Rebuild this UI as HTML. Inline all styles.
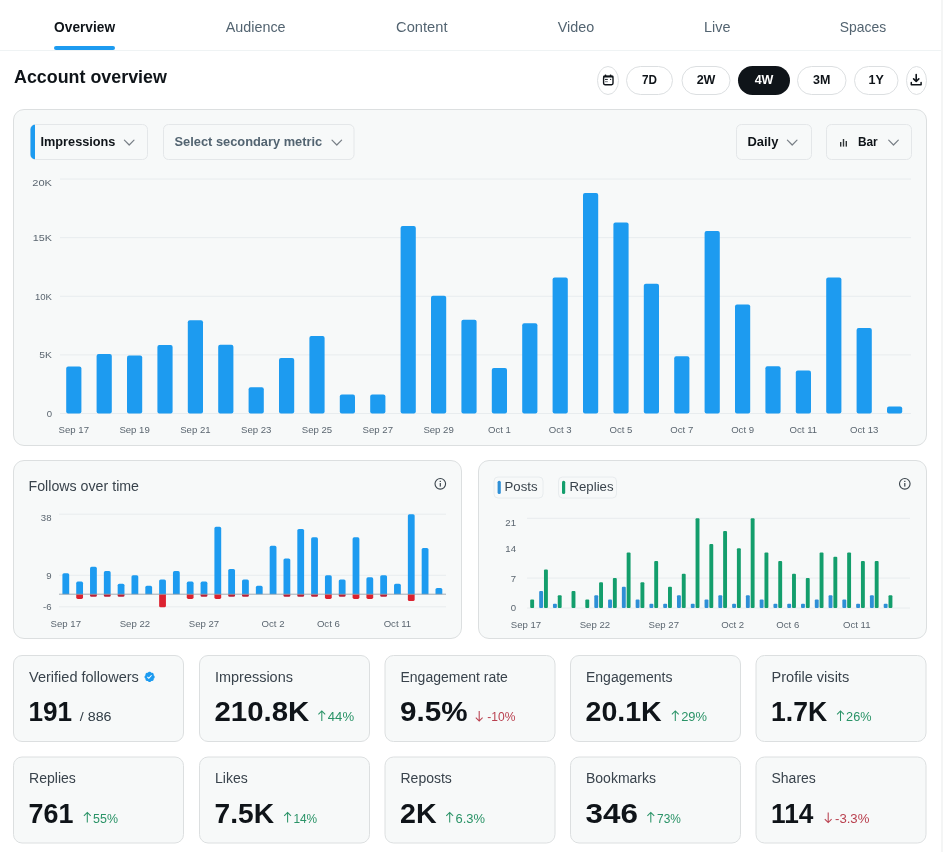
<!DOCTYPE html>
<html><head><meta charset="utf-8"><title>Account overview</title>
<style>
html,body{margin:0;padding:0;background:#fff;}
body{width:943px;height:852px;overflow:hidden;position:relative;font-family:"Liberation Sans", sans-serif;}
svg{position:absolute;left:0;top:0;font-family:"Liberation Sans", sans-serif;will-change:transform;}
.ch{position:absolute;white-space:nowrap;font-size:13px;line-height:13px;}
</style></head><body>
<svg width="943" height="852" viewBox="0 0 943 852">
<defs><clipPath id="c1"><rect x="30.5" y="124.5" width="117" height="35" rx="5"/></clipPath></defs>
<text x="84.6" y="32" font-size="14.2" fill="#0f1419" font-weight="bold" text-anchor="middle"  textLength="61.00" lengthAdjust="spacingAndGlyphs">Overview</text>
<text x="255.7" y="32" font-size="14.2" fill="#536471" font-weight="normal" text-anchor="middle"  textLength="59.82" lengthAdjust="spacingAndGlyphs">Audience</text>
<text x="421.8" y="32" font-size="14.2" fill="#536471" font-weight="normal" text-anchor="middle"  textLength="51.36" lengthAdjust="spacingAndGlyphs">Content</text>
<text x="576" y="32" font-size="14.2" fill="#536471" font-weight="normal" text-anchor="middle"  textLength="36.47" lengthAdjust="spacingAndGlyphs">Video</text>
<text x="717.2" y="32" font-size="14.2" fill="#536471" font-weight="normal" text-anchor="middle"  textLength="26.47" lengthAdjust="spacingAndGlyphs">Live</text>
<text x="863" y="32" font-size="14.2" fill="#536471" font-weight="normal" text-anchor="middle"  textLength="46.35" lengthAdjust="spacingAndGlyphs">Spaces</text>
<line x1="0" y1="50.5" x2="943" y2="50.5" stroke="#eff3f4" stroke-width="1"/>
<rect x="54" y="46" width="61" height="4" rx="2" fill="#1d9bf0" stroke="none" stroke-width="1" />
<text x="14" y="83" font-size="18" fill="#0f1419" font-weight="bold" text-anchor="start"  textLength="152.86" lengthAdjust="spacingAndGlyphs">Account overview</text>
<rect x="597.5" y="66.5" width="21" height="28" rx="14" fill="#ffffff" stroke="#dcdfe1" stroke-width="1" />
<rect x="626.5" y="66.5" width="46" height="28" rx="14" fill="#ffffff" stroke="#dcdfe1" stroke-width="1" />
<text x="649.5" y="84.3" font-size="12.5" fill="#0f1419" font-weight="bold" text-anchor="middle"  textLength="14.98" lengthAdjust="spacingAndGlyphs">7D</text>
<rect x="682.0" y="66.5" width="48" height="28" rx="14" fill="#ffffff" stroke="#dcdfe1" stroke-width="1" />
<text x="706.0" y="84.3" font-size="12.5" fill="#0f1419" font-weight="bold" text-anchor="middle"  textLength="18.75" lengthAdjust="spacingAndGlyphs">2W</text>
<rect x="738" y="66" width="52" height="29" rx="14.5" fill="#0f1419" stroke="none" stroke-width="1" />
<text x="764.0" y="84.3" font-size="12.5" fill="#ffffff" font-weight="bold" text-anchor="middle"  textLength="18.75" lengthAdjust="spacingAndGlyphs">4W</text>
<rect x="797.5" y="66.5" width="48.5" height="28" rx="14" fill="#ffffff" stroke="#dcdfe1" stroke-width="1" />
<text x="821.75" y="84.3" font-size="12.5" fill="#0f1419" font-weight="bold" text-anchor="middle"  textLength="17.36" lengthAdjust="spacingAndGlyphs">3M</text>
<rect x="854.5" y="66.5" width="43.5" height="28" rx="14" fill="#ffffff" stroke="#dcdfe1" stroke-width="1" />
<text x="876.25" y="84.3" font-size="12.5" fill="#0f1419" font-weight="bold" text-anchor="middle"  textLength="15.29" lengthAdjust="spacingAndGlyphs">1Y</text>
<rect x="906.5" y="66.5" width="20" height="28" rx="14" fill="#ffffff" stroke="#dcdfe1" stroke-width="1" />
<rect x="603.6" y="76.4" width="9.4" height="8.3" rx="1.4" fill="none" stroke="#0f1419" stroke-width="1.4" />
<rect x="603.2" y="75.6" width="10.2" height="1.9" rx="0.6" fill="#0f1419" stroke="none" stroke-width="1" />
<rect x="604.7" y="74.6" width="1.6" height="1.8" rx="0.5" fill="#0f1419" stroke="none" stroke-width="1" />
<rect x="609.8" y="74.6" width="1.6" height="1.8" rx="0.5" fill="#0f1419" stroke="none" stroke-width="1" />
<rect x="605.0" y="78.9" width="2.8" height="1.1" rx="0" fill="#2a3036" stroke="none" stroke-width="1" />
<rect x="610.0" y="78.9" width="1.2" height="1.1" rx="0" fill="#2a3036" stroke="none" stroke-width="1" />
<rect x="605.0" y="81.1" width="2.8" height="1.1" rx="0" fill="#80868b" stroke="none" stroke-width="1" />
<path d="M916.2 74.6 V81.3 M913.6 78.9 L916.2 81.5 L918.8 78.9" fill="none" stroke="#0f1419" stroke-width="1.6" stroke-linecap="round" stroke-linejoin="round"/>
<path d="M911.3 82.6 V84.7 H921.1 V82.6" fill="none" stroke="#0f1419" stroke-width="1.5" stroke-linecap="round" stroke-linejoin="round"/>
<rect x="13.5" y="109.5" width="913" height="336" rx="10.5" fill="#f7f9f9" stroke="#dcdfe0" stroke-width="1" />
<rect x="30.5" y="124.5" width="117" height="35" rx="5" fill="#f7f9f9" stroke="#e4e7e9" stroke-width="1" />
<rect x="30" y="124.5" width="5" height="35" rx="0" fill="#1d9bf0" stroke="none" stroke-width="1" clip-path="url(#c1)"/>
<text x="40.5" y="146.2" font-size="13.6" fill="#0f1419" font-weight="bold" text-anchor="start"  textLength="74.95" lengthAdjust="spacingAndGlyphs">Impressions</text>
<path d="M124.39999999999999 140.2 L129.2 145.0 L134.0 140.2" fill="none" stroke="#787f86" stroke-width="1.2" stroke-linecap="round" stroke-linejoin="round"/>
<rect x="163.5" y="124.5" width="190.5" height="35" rx="5" fill="#f7f9f9" stroke="#e4e7e9" stroke-width="1" />
<text x="174.5" y="146.2" font-size="12.75" fill="#536471" font-weight="bold" text-anchor="start"  textLength="147.70" lengthAdjust="spacingAndGlyphs">Select secondary metric</text>
<path d="M332.0 140.2 L336.8 145.0 L341.6 140.2" fill="none" stroke="#787f86" stroke-width="1.2" stroke-linecap="round" stroke-linejoin="round"/>
<rect x="736.5" y="124.5" width="75" height="35" rx="5" fill="#f7f9f9" stroke="#e4e7e9" stroke-width="1" />
<text x="747.5" y="146.2" font-size="13.6" fill="#0f1419" font-weight="bold" text-anchor="start"  textLength="30.88" lengthAdjust="spacingAndGlyphs">Daily</text>
<path d="M787.4000000000001 140.2 L792.2 145.0 L797.0 140.2" fill="none" stroke="#787f86" stroke-width="1.2" stroke-linecap="round" stroke-linejoin="round"/>
<rect x="826.5" y="124.5" width="85" height="35" rx="5" fill="#f7f9f9" stroke="#e4e7e9" stroke-width="1" />
<rect x="840" y="142" width="1.4" height="4.599999999999994" rx="0" fill="#2f3336" stroke="none" stroke-width="1" />
<rect x="842.8" y="139" width="1.4" height="7.599999999999994" rx="0" fill="#2f3336" stroke="none" stroke-width="1" />
<rect x="845.6" y="141" width="1.4" height="5.599999999999994" rx="0" fill="#2f3336" stroke="none" stroke-width="1" />
<text x="858" y="146.2" font-size="13.6" fill="#0f1419" font-weight="bold" text-anchor="start"  textLength="19.72" lengthAdjust="spacingAndGlyphs">Bar</text>
<path d="M888.7 140.2 L893.5 145.0 L898.3 140.2" fill="none" stroke="#787f86" stroke-width="1.2" stroke-linecap="round" stroke-linejoin="round"/>
<line x1="60" y1="179.0" x2="911" y2="179.0" stroke="#e8ecee" stroke-width="1"/>
<text x="52" y="186.0" font-size="9.6" fill="#5b6670" font-weight="normal" text-anchor="end"  textLength="19.70" lengthAdjust="spacingAndGlyphs">20K</text>
<line x1="60" y1="237.625" x2="911" y2="237.625" stroke="#e8ecee" stroke-width="1"/>
<text x="52" y="241.025" font-size="9.6" fill="#5b6670" font-weight="normal" text-anchor="end"  textLength="19.21" lengthAdjust="spacingAndGlyphs">15K</text>
<line x1="60" y1="296.25" x2="911" y2="296.25" stroke="#e8ecee" stroke-width="1"/>
<text x="52" y="299.65" font-size="9.6" fill="#5b6670" font-weight="normal" text-anchor="end"  textLength="17.08" lengthAdjust="spacingAndGlyphs">10K</text>
<line x1="60" y1="354.875" x2="911" y2="354.875" stroke="#e8ecee" stroke-width="1"/>
<text x="52" y="358.275" font-size="9.6" fill="#5b6670" font-weight="normal" text-anchor="end"  textLength="12.65" lengthAdjust="spacingAndGlyphs">5K</text>
<line x1="60" y1="413.5" x2="911" y2="413.5" stroke="#e8ecee" stroke-width="1"/>
<text x="52" y="416.9" font-size="9.6" fill="#5b6670" font-weight="normal" text-anchor="end"  textLength="5.34" lengthAdjust="spacingAndGlyphs">0</text>
<rect x="66.2" y="366.6" width="15.2" height="46.9" rx="2" fill="#1d9bf0" stroke="none" stroke-width="1" />
<rect x="96.6" y="353.94" width="15.2" height="59.56" rx="2" fill="#1d9bf0" stroke="none" stroke-width="1" />
<rect x="127.0" y="355.58" width="15.2" height="57.92" rx="2" fill="#1d9bf0" stroke="none" stroke-width="1" />
<rect x="157.4" y="345.03" width="15.2" height="68.47" rx="2" fill="#1d9bf0" stroke="none" stroke-width="1" />
<rect x="187.8" y="320.29" width="15.2" height="93.21" rx="2" fill="#1d9bf0" stroke="none" stroke-width="1" />
<rect x="218.2" y="344.79" width="15.2" height="68.71" rx="2" fill="#1d9bf0" stroke="none" stroke-width="1" />
<rect x="248.6" y="387.35" width="15.2" height="26.15" rx="2" fill="#1d9bf0" stroke="none" stroke-width="1" />
<rect x="279.0" y="358.04" width="15.2" height="55.46" rx="2" fill="#1d9bf0" stroke="none" stroke-width="1" />
<rect x="309.4" y="336.12" width="15.2" height="77.38" rx="2" fill="#1d9bf0" stroke="none" stroke-width="1" />
<rect x="339.8" y="394.39" width="15.2" height="19.11" rx="2" fill="#1d9bf0" stroke="none" stroke-width="1" />
<rect x="370.2" y="394.39" width="15.2" height="19.11" rx="2" fill="#1d9bf0" stroke="none" stroke-width="1" />
<rect x="400.6" y="225.9" width="15.2" height="187.6" rx="2" fill="#1d9bf0" stroke="none" stroke-width="1" />
<rect x="431.0" y="295.78" width="15.2" height="117.72" rx="2" fill="#1d9bf0" stroke="none" stroke-width="1" />
<rect x="461.4" y="319.7" width="15.2" height="93.8" rx="2" fill="#1d9bf0" stroke="none" stroke-width="1" />
<rect x="491.8" y="368.01" width="15.2" height="45.49" rx="2" fill="#1d9bf0" stroke="none" stroke-width="1" />
<rect x="522.2" y="323.22" width="15.2" height="90.28" rx="2" fill="#1d9bf0" stroke="none" stroke-width="1" />
<rect x="552.6" y="277.49" width="15.2" height="136.01" rx="2" fill="#1d9bf0" stroke="none" stroke-width="1" />
<rect x="583.0" y="193.07" width="15.2" height="220.43" rx="2" fill="#1d9bf0" stroke="none" stroke-width="1" />
<rect x="613.4" y="222.38" width="15.2" height="191.12" rx="2" fill="#1d9bf0" stroke="none" stroke-width="1" />
<rect x="643.8" y="283.7" width="15.2" height="129.8" rx="2" fill="#1d9bf0" stroke="none" stroke-width="1" />
<rect x="674.2" y="356.28" width="15.2" height="57.22" rx="2" fill="#1d9bf0" stroke="none" stroke-width="1" />
<rect x="704.6" y="230.94" width="15.2" height="182.56" rx="2" fill="#1d9bf0" stroke="none" stroke-width="1" />
<rect x="735.0" y="304.46" width="15.2" height="109.04" rx="2" fill="#1d9bf0" stroke="none" stroke-width="1" />
<rect x="765.4" y="366.37" width="15.2" height="47.13" rx="2" fill="#1d9bf0" stroke="none" stroke-width="1" />
<rect x="795.8" y="370.59" width="15.2" height="42.91" rx="2" fill="#1d9bf0" stroke="none" stroke-width="1" />
<rect x="826.2" y="277.49" width="15.2" height="136.01" rx="2" fill="#1d9bf0" stroke="none" stroke-width="1" />
<rect x="856.6" y="327.91" width="15.2" height="85.59" rx="2" fill="#1d9bf0" stroke="none" stroke-width="1" />
<rect x="887.0" y="406.46" width="15.2" height="7.03" rx="2" fill="#1d9bf0" stroke="none" stroke-width="1" />
<text x="73.8" y="432.8" font-size="9.6" fill="#5b6670" font-weight="normal" text-anchor="middle" >Sep 17</text>
<text x="134.6" y="432.8" font-size="9.6" fill="#5b6670" font-weight="normal" text-anchor="middle" >Sep 19</text>
<text x="195.4" y="432.8" font-size="9.6" fill="#5b6670" font-weight="normal" text-anchor="middle" >Sep 21</text>
<text x="256.2" y="432.8" font-size="9.6" fill="#5b6670" font-weight="normal" text-anchor="middle" >Sep 23</text>
<text x="317.0" y="432.8" font-size="9.6" fill="#5b6670" font-weight="normal" text-anchor="middle" >Sep 25</text>
<text x="377.8" y="432.8" font-size="9.6" fill="#5b6670" font-weight="normal" text-anchor="middle" >Sep 27</text>
<text x="438.6" y="432.8" font-size="9.6" fill="#5b6670" font-weight="normal" text-anchor="middle" >Sep 29</text>
<text x="499.4" y="432.8" font-size="9.6" fill="#5b6670" font-weight="normal" text-anchor="middle" >Oct 1</text>
<text x="560.2" y="432.8" font-size="9.6" fill="#5b6670" font-weight="normal" text-anchor="middle" >Oct 3</text>
<text x="621.0" y="432.8" font-size="9.6" fill="#5b6670" font-weight="normal" text-anchor="middle" >Oct 5</text>
<text x="681.8" y="432.8" font-size="9.6" fill="#5b6670" font-weight="normal" text-anchor="middle" >Oct 7</text>
<text x="742.6" y="432.8" font-size="9.6" fill="#5b6670" font-weight="normal" text-anchor="middle" >Oct 9</text>
<text x="803.4" y="432.8" font-size="9.6" fill="#5b6670" font-weight="normal" text-anchor="middle" >Oct 11</text>
<text x="864.2" y="432.8" font-size="9.6" fill="#5b6670" font-weight="normal" text-anchor="middle" >Oct 13</text>
<rect x="13.5" y="460.5" width="448" height="178" rx="10.5" fill="#f7f9f9" stroke="#dcdfe0" stroke-width="1" />
<text x="28.5" y="491" font-size="14" fill="#39434c" font-weight="normal" text-anchor="start"  textLength="110.53" lengthAdjust="spacingAndGlyphs">Follows over time</text>
<circle cx="440.3" cy="483.8" r="5.3" fill="none" stroke="#3a444c" stroke-width="1.1"/>
<rect x="439.7" y="483.0" width="1.2" height="3.6" rx="0" fill="#3a444c" stroke="none" stroke-width="1" />
<rect x="439.7" y="480.8" width="1.2" height="1.2" rx="0" fill="#3a444c" stroke="none" stroke-width="1" />
<line x1="59" y1="514.2" x2="446" y2="514.2" stroke="#e8ecee" stroke-width="1"/>
<text x="51.5" y="521.2" font-size="9.6" fill="#5b6670" font-weight="normal" text-anchor="end" >38</text>
<line x1="59" y1="575.2526315789474" x2="446" y2="575.2526315789474" stroke="#e8ecee" stroke-width="1"/>
<text x="51.5" y="578.6526315789474" font-size="9.6" fill="#5b6670" font-weight="normal" text-anchor="end" >9</text>
<line x1="59" y1="606.8315789473685" x2="446" y2="606.8315789473685" stroke="#e8ecee" stroke-width="1"/>
<text x="51.5" y="610.2315789473685" font-size="9.6" fill="#5b6670" font-weight="normal" text-anchor="end" >-6</text>
<path d="M62.40 594.20 V574.75 Q62.40 573.15 64.00 573.15 H67.60 Q69.20 573.15 69.20 574.75 V594.20 Z" fill="#1d9bf0" stroke="none" stroke-width="1" />
<path d="M76.22 594.20 V583.17 Q76.22 581.57 77.82 581.57 H81.42 Q83.02 581.57 83.02 583.17 V594.20 Z" fill="#1d9bf0" stroke="none" stroke-width="1" />
<path d="M76.22 594.20 V597.31 Q76.22 598.91 77.82 598.91 H81.42 Q83.02 598.91 83.02 597.31 V594.20 Z" fill="#dc2230" stroke="none" stroke-width="1" />
<path d="M90.04 594.20 V568.43 Q90.04 566.83 91.64 566.83 H95.24 Q96.84 566.83 96.84 568.43 V594.20 Z" fill="#1d9bf0" stroke="none" stroke-width="1" />
<path d="M90.04 594.20 V595.50 Q90.04 596.81 91.34 596.81 H95.53 Q96.84 596.81 96.84 595.50 V594.20 Z" fill="#b8203a" stroke="none" stroke-width="1" />
<path d="M103.86 594.20 V572.64 Q103.86 571.04 105.46 571.04 H109.06 Q110.66 571.04 110.66 572.64 V594.20 Z" fill="#1d9bf0" stroke="none" stroke-width="1" />
<path d="M103.86 594.20 V595.50 Q103.86 596.81 105.16 596.81 H109.35 Q110.66 596.81 110.66 595.50 V594.20 Z" fill="#b8203a" stroke="none" stroke-width="1" />
<path d="M117.67 594.20 V585.27 Q117.67 583.67 119.27 583.67 H122.87 Q124.47 583.67 124.47 585.27 V594.20 Z" fill="#1d9bf0" stroke="none" stroke-width="1" />
<path d="M117.67 594.20 V595.50 Q117.67 596.81 118.98 596.81 H123.17 Q124.47 596.81 124.47 595.50 V594.20 Z" fill="#b8203a" stroke="none" stroke-width="1" />
<path d="M131.49 594.20 V576.85 Q131.49 575.25 133.09 575.25 H136.69 Q138.29 575.25 138.29 576.85 V594.20 Z" fill="#1d9bf0" stroke="none" stroke-width="1" />
<path d="M145.31 594.20 V587.38 Q145.31 585.78 146.91 585.78 H150.51 Q152.11 585.78 152.11 587.38 V594.20 Z" fill="#1d9bf0" stroke="none" stroke-width="1" />
<path d="M159.13 594.20 V581.06 Q159.13 579.46 160.73 579.46 H164.33 Q165.93 579.46 165.93 581.06 V594.20 Z" fill="#1d9bf0" stroke="none" stroke-width="1" />
<path d="M159.13 594.20 V605.73 Q159.13 607.33 160.73 607.33 H164.33 Q165.93 607.33 165.93 605.73 V594.20 Z" fill="#dc2230" stroke="none" stroke-width="1" />
<path d="M172.95 594.20 V572.64 Q172.95 571.04 174.55 571.04 H178.15 Q179.75 571.04 179.75 572.64 V594.20 Z" fill="#1d9bf0" stroke="none" stroke-width="1" />
<path d="M186.77 594.20 V583.17 Q186.77 581.57 188.37 581.57 H191.97 Q193.57 581.57 193.57 583.17 V594.20 Z" fill="#1d9bf0" stroke="none" stroke-width="1" />
<path d="M186.77 594.20 V597.31 Q186.77 598.91 188.37 598.91 H191.97 Q193.57 598.91 193.57 597.31 V594.20 Z" fill="#dc2230" stroke="none" stroke-width="1" />
<path d="M200.59 594.20 V583.17 Q200.59 581.57 202.19 581.57 H205.79 Q207.39 581.57 207.39 583.17 V594.20 Z" fill="#1d9bf0" stroke="none" stroke-width="1" />
<path d="M200.59 594.20 V595.50 Q200.59 596.81 201.89 596.81 H206.08 Q207.39 596.81 207.39 595.50 V594.20 Z" fill="#b8203a" stroke="none" stroke-width="1" />
<path d="M214.40 594.20 V528.43 Q214.40 526.83 216.00 526.83 H219.60 Q221.20 526.83 221.20 528.43 V594.20 Z" fill="#1d9bf0" stroke="none" stroke-width="1" />
<path d="M214.40 594.20 V597.31 Q214.40 598.91 216.00 598.91 H219.60 Q221.20 598.91 221.20 597.31 V594.20 Z" fill="#dc2230" stroke="none" stroke-width="1" />
<path d="M228.22 594.20 V570.54 Q228.22 568.94 229.82 568.94 H233.42 Q235.02 568.94 235.02 570.54 V594.20 Z" fill="#1d9bf0" stroke="none" stroke-width="1" />
<path d="M228.22 594.20 V595.50 Q228.22 596.81 229.52 596.81 H233.72 Q235.02 596.81 235.02 595.50 V594.20 Z" fill="#b8203a" stroke="none" stroke-width="1" />
<path d="M242.04 594.20 V581.06 Q242.04 579.46 243.64 579.46 H247.24 Q248.84 579.46 248.84 581.06 V594.20 Z" fill="#1d9bf0" stroke="none" stroke-width="1" />
<path d="M242.04 594.20 V595.50 Q242.04 596.81 243.34 596.81 H247.54 Q248.84 596.81 248.84 595.50 V594.20 Z" fill="#b8203a" stroke="none" stroke-width="1" />
<path d="M255.86 594.20 V587.38 Q255.86 585.78 257.46 585.78 H261.06 Q262.66 585.78 262.66 587.38 V594.20 Z" fill="#1d9bf0" stroke="none" stroke-width="1" />
<path d="M269.68 594.20 V547.38 Q269.68 545.78 271.28 545.78 H274.88 Q276.48 545.78 276.48 547.38 V594.20 Z" fill="#1d9bf0" stroke="none" stroke-width="1" />
<path d="M283.50 594.20 V560.01 Q283.50 558.41 285.10 558.41 H288.70 Q290.30 558.41 290.30 560.01 V594.20 Z" fill="#1d9bf0" stroke="none" stroke-width="1" />
<path d="M283.50 594.20 V595.50 Q283.50 596.81 284.80 596.81 H288.99 Q290.30 596.81 290.30 595.50 V594.20 Z" fill="#b8203a" stroke="none" stroke-width="1" />
<path d="M297.31 594.20 V530.54 Q297.31 528.94 298.91 528.94 H302.51 Q304.11 528.94 304.11 530.54 V594.20 Z" fill="#1d9bf0" stroke="none" stroke-width="1" />
<path d="M297.31 594.20 V595.50 Q297.31 596.81 298.62 596.81 H302.81 Q304.11 596.81 304.11 595.50 V594.20 Z" fill="#b8203a" stroke="none" stroke-width="1" />
<path d="M311.13 594.20 V538.96 Q311.13 537.36 312.73 537.36 H316.33 Q317.93 537.36 317.93 538.96 V594.20 Z" fill="#1d9bf0" stroke="none" stroke-width="1" />
<path d="M311.13 594.20 V595.50 Q311.13 596.81 312.44 596.81 H316.63 Q317.93 596.81 317.93 595.50 V594.20 Z" fill="#b8203a" stroke="none" stroke-width="1" />
<path d="M324.95 594.20 V576.85 Q324.95 575.25 326.55 575.25 H330.15 Q331.75 575.25 331.75 576.85 V594.20 Z" fill="#1d9bf0" stroke="none" stroke-width="1" />
<path d="M324.95 594.20 V597.31 Q324.95 598.91 326.55 598.91 H330.15 Q331.75 598.91 331.75 597.31 V594.20 Z" fill="#dc2230" stroke="none" stroke-width="1" />
<path d="M338.77 594.20 V581.06 Q338.77 579.46 340.37 579.46 H343.97 Q345.57 579.46 345.57 581.06 V594.20 Z" fill="#1d9bf0" stroke="none" stroke-width="1" />
<path d="M338.77 594.20 V595.50 Q338.77 596.81 340.07 596.81 H344.27 Q345.57 596.81 345.57 595.50 V594.20 Z" fill="#b8203a" stroke="none" stroke-width="1" />
<path d="M352.59 594.20 V538.96 Q352.59 537.36 354.19 537.36 H357.79 Q359.39 537.36 359.39 538.96 V594.20 Z" fill="#1d9bf0" stroke="none" stroke-width="1" />
<path d="M352.59 594.20 V597.31 Q352.59 598.91 354.19 598.91 H357.79 Q359.39 598.91 359.39 597.31 V594.20 Z" fill="#dc2230" stroke="none" stroke-width="1" />
<path d="M366.41 594.20 V578.96 Q366.41 577.36 368.01 577.36 H371.61 Q373.21 577.36 373.21 578.96 V594.20 Z" fill="#1d9bf0" stroke="none" stroke-width="1" />
<path d="M366.41 594.20 V597.31 Q366.41 598.91 368.01 598.91 H371.61 Q373.21 598.91 373.21 597.31 V594.20 Z" fill="#dc2230" stroke="none" stroke-width="1" />
<path d="M380.23 594.20 V576.85 Q380.23 575.25 381.83 575.25 H385.43 Q387.03 575.25 387.03 576.85 V594.20 Z" fill="#1d9bf0" stroke="none" stroke-width="1" />
<path d="M380.23 594.20 V595.50 Q380.23 596.81 381.53 596.81 H385.72 Q387.03 596.81 387.03 595.50 V594.20 Z" fill="#b8203a" stroke="none" stroke-width="1" />
<path d="M394.04 594.20 V585.27 Q394.04 583.67 395.64 583.67 H399.24 Q400.84 583.67 400.84 585.27 V594.20 Z" fill="#1d9bf0" stroke="none" stroke-width="1" />
<path d="M407.86 594.20 V515.80 Q407.86 514.20 409.46 514.20 H413.06 Q414.66 514.20 414.66 515.80 V594.20 Z" fill="#1d9bf0" stroke="none" stroke-width="1" />
<path d="M407.86 594.20 V599.42 Q407.86 601.02 409.46 601.02 H413.06 Q414.66 601.02 414.66 599.42 V594.20 Z" fill="#dc2230" stroke="none" stroke-width="1" />
<path d="M421.68 594.20 V549.48 Q421.68 547.88 423.28 547.88 H426.88 Q428.48 547.88 428.48 549.48 V594.20 Z" fill="#1d9bf0" stroke="none" stroke-width="1" />
<path d="M435.50 594.20 V589.48 Q435.50 587.88 437.10 587.88 H440.70 Q442.30 587.88 442.30 589.48 V594.20 Z" fill="#1d9bf0" stroke="none" stroke-width="1" />
<line x1="59" y1="594.2" x2="446" y2="594.2" stroke="#8d99a5" stroke-width="0.8"/>
<text x="65.8" y="627" font-size="9.6" fill="#5b6670" font-weight="normal" text-anchor="middle" >Sep 17</text>
<text x="134.89" y="627" font-size="9.6" fill="#5b6670" font-weight="normal" text-anchor="middle" >Sep 22</text>
<text x="203.99" y="627" font-size="9.6" fill="#5b6670" font-weight="normal" text-anchor="middle" >Sep 27</text>
<text x="273.08" y="627" font-size="9.6" fill="#5b6670" font-weight="normal" text-anchor="middle" >Oct 2</text>
<text x="328.35" y="627" font-size="9.6" fill="#5b6670" font-weight="normal" text-anchor="middle" >Oct 6</text>
<text x="397.44" y="627" font-size="9.6" fill="#5b6670" font-weight="normal" text-anchor="middle" >Oct 11</text>
<rect x="478.5" y="460.5" width="448" height="178" rx="10.5" fill="#f7f9f9" stroke="#dcdfe0" stroke-width="1" />
<rect x="494" y="477" width="49" height="21" rx="4" fill="#f7f9f9" stroke="#e8ecee" stroke-width="1" />
<rect x="497.6" y="480.8" width="3.2" height="13.2" rx="1.5" fill="#2e8fd6" stroke="none" stroke-width="1" />
<text x="504.5" y="491.2" font-size="13.2" fill="#39434c" font-weight="normal" text-anchor="start"  textLength="33.01" lengthAdjust="spacingAndGlyphs">Posts</text>
<rect x="558.5" y="477" width="58" height="21" rx="4" fill="#f7f9f9" stroke="#e8ecee" stroke-width="1" />
<rect x="562" y="480.8" width="3.2" height="13.2" rx="1.5" fill="#139e6c" stroke="none" stroke-width="1" />
<text x="569.5" y="491.2" font-size="13.2" fill="#39434c" font-weight="normal" text-anchor="start"  textLength="44.02" lengthAdjust="spacingAndGlyphs">Replies</text>
<circle cx="904.8" cy="483.8" r="5.3" fill="none" stroke="#3a444c" stroke-width="1.1"/>
<rect x="904.1999999999999" y="483.0" width="1.2" height="3.6" rx="0" fill="#3a444c" stroke="none" stroke-width="1" />
<rect x="904.1999999999999" y="480.8" width="1.2" height="1.2" rx="0" fill="#3a444c" stroke="none" stroke-width="1" />
<line x1="527" y1="518.3" x2="910" y2="518.3" stroke="#e8ecee" stroke-width="1"/>
<text x="516" y="525.9" font-size="9.6" fill="#5b6670" font-weight="normal" text-anchor="end" >21</text>
<text x="516" y="551.5999999999999" font-size="9.6" fill="#5b6670" font-weight="normal" text-anchor="end" >14</text>
<line x1="527" y1="578.1" x2="910" y2="578.1" stroke="#e8ecee" stroke-width="1"/>
<text x="516" y="581.5" font-size="9.6" fill="#5b6670" font-weight="normal" text-anchor="end" >7</text>
<line x1="527" y1="608.0" x2="910" y2="608.0" stroke="#e8ecee" stroke-width="1"/>
<text x="516" y="611.4" font-size="9.6" fill="#5b6670" font-weight="normal" text-anchor="end" >0</text>
<rect x="530.2" y="599.46" width="3.9" height="8.54" rx="1" fill="#139e6c" stroke="none" stroke-width="1" />
<rect x="539.18" y="590.91" width="3.9" height="17.09" rx="1" fill="#2e8fd6" stroke="none" stroke-width="1" />
<rect x="543.98" y="569.56" width="3.9" height="38.44" rx="1" fill="#139e6c" stroke="none" stroke-width="1" />
<rect x="552.96" y="603.73" width="3.9" height="4.27" rx="1" fill="#2e8fd6" stroke="none" stroke-width="1" />
<rect x="557.76" y="595.19" width="3.9" height="12.81" rx="1" fill="#139e6c" stroke="none" stroke-width="1" />
<rect x="571.54" y="590.91" width="3.9" height="17.09" rx="1" fill="#139e6c" stroke="none" stroke-width="1" />
<rect x="585.32" y="599.46" width="3.9" height="8.54" rx="1" fill="#139e6c" stroke="none" stroke-width="1" />
<rect x="594.3" y="595.19" width="3.9" height="12.81" rx="1" fill="#2e8fd6" stroke="none" stroke-width="1" />
<rect x="599.1" y="582.37" width="3.9" height="25.63" rx="1" fill="#139e6c" stroke="none" stroke-width="1" />
<rect x="608.08" y="599.46" width="3.9" height="8.54" rx="1" fill="#2e8fd6" stroke="none" stroke-width="1" />
<rect x="612.88" y="578.1" width="3.9" height="29.9" rx="1" fill="#139e6c" stroke="none" stroke-width="1" />
<rect x="621.87" y="586.64" width="3.9" height="21.36" rx="1" fill="#2e8fd6" stroke="none" stroke-width="1" />
<rect x="626.67" y="552.47" width="3.9" height="55.53" rx="1" fill="#139e6c" stroke="none" stroke-width="1" />
<rect x="635.65" y="599.46" width="3.9" height="8.54" rx="1" fill="#2e8fd6" stroke="none" stroke-width="1" />
<rect x="640.45" y="582.37" width="3.9" height="25.63" rx="1" fill="#139e6c" stroke="none" stroke-width="1" />
<rect x="649.43" y="603.73" width="3.9" height="4.27" rx="1" fill="#2e8fd6" stroke="none" stroke-width="1" />
<rect x="654.23" y="561.01" width="3.9" height="46.99" rx="1" fill="#139e6c" stroke="none" stroke-width="1" />
<rect x="663.21" y="603.73" width="3.9" height="4.27" rx="1" fill="#2e8fd6" stroke="none" stroke-width="1" />
<rect x="668.01" y="586.64" width="3.9" height="21.36" rx="1" fill="#139e6c" stroke="none" stroke-width="1" />
<rect x="676.99" y="595.19" width="3.9" height="12.81" rx="1" fill="#2e8fd6" stroke="none" stroke-width="1" />
<rect x="681.79" y="573.83" width="3.9" height="34.17" rx="1" fill="#139e6c" stroke="none" stroke-width="1" />
<rect x="690.77" y="603.73" width="3.9" height="4.27" rx="1" fill="#2e8fd6" stroke="none" stroke-width="1" />
<rect x="695.57" y="518.3" width="3.9" height="89.7" rx="1" fill="#139e6c" stroke="none" stroke-width="1" />
<rect x="704.55" y="599.46" width="3.9" height="8.54" rx="1" fill="#2e8fd6" stroke="none" stroke-width="1" />
<rect x="709.35" y="543.93" width="3.9" height="64.07" rx="1" fill="#139e6c" stroke="none" stroke-width="1" />
<rect x="718.33" y="595.19" width="3.9" height="12.81" rx="1" fill="#2e8fd6" stroke="none" stroke-width="1" />
<rect x="723.13" y="531.11" width="3.9" height="76.89" rx="1" fill="#139e6c" stroke="none" stroke-width="1" />
<rect x="732.11" y="603.73" width="3.9" height="4.27" rx="1" fill="#2e8fd6" stroke="none" stroke-width="1" />
<rect x="736.91" y="548.2" width="3.9" height="59.8" rx="1" fill="#139e6c" stroke="none" stroke-width="1" />
<rect x="745.89" y="595.19" width="3.9" height="12.81" rx="1" fill="#2e8fd6" stroke="none" stroke-width="1" />
<rect x="750.69" y="518.3" width="3.9" height="89.7" rx="1" fill="#139e6c" stroke="none" stroke-width="1" />
<rect x="759.67" y="599.46" width="3.9" height="8.54" rx="1" fill="#2e8fd6" stroke="none" stroke-width="1" />
<rect x="764.47" y="552.47" width="3.9" height="55.53" rx="1" fill="#139e6c" stroke="none" stroke-width="1" />
<rect x="773.45" y="603.73" width="3.9" height="4.27" rx="1" fill="#2e8fd6" stroke="none" stroke-width="1" />
<rect x="778.25" y="561.01" width="3.9" height="46.99" rx="1" fill="#139e6c" stroke="none" stroke-width="1" />
<rect x="787.23" y="603.73" width="3.9" height="4.27" rx="1" fill="#2e8fd6" stroke="none" stroke-width="1" />
<rect x="792.03" y="573.83" width="3.9" height="34.17" rx="1" fill="#139e6c" stroke="none" stroke-width="1" />
<rect x="801.02" y="603.73" width="3.9" height="4.27" rx="1" fill="#2e8fd6" stroke="none" stroke-width="1" />
<rect x="805.82" y="578.1" width="3.9" height="29.9" rx="1" fill="#139e6c" stroke="none" stroke-width="1" />
<rect x="814.8" y="599.46" width="3.9" height="8.54" rx="1" fill="#2e8fd6" stroke="none" stroke-width="1" />
<rect x="819.6" y="552.47" width="3.9" height="55.53" rx="1" fill="#139e6c" stroke="none" stroke-width="1" />
<rect x="828.58" y="595.19" width="3.9" height="12.81" rx="1" fill="#2e8fd6" stroke="none" stroke-width="1" />
<rect x="833.38" y="556.74" width="3.9" height="51.26" rx="1" fill="#139e6c" stroke="none" stroke-width="1" />
<rect x="842.36" y="599.46" width="3.9" height="8.54" rx="1" fill="#2e8fd6" stroke="none" stroke-width="1" />
<rect x="847.16" y="552.47" width="3.9" height="55.53" rx="1" fill="#139e6c" stroke="none" stroke-width="1" />
<rect x="856.14" y="603.73" width="3.9" height="4.27" rx="1" fill="#2e8fd6" stroke="none" stroke-width="1" />
<rect x="860.94" y="561.01" width="3.9" height="46.99" rx="1" fill="#139e6c" stroke="none" stroke-width="1" />
<rect x="869.92" y="595.19" width="3.9" height="12.81" rx="1" fill="#2e8fd6" stroke="none" stroke-width="1" />
<rect x="874.72" y="561.01" width="3.9" height="46.99" rx="1" fill="#139e6c" stroke="none" stroke-width="1" />
<rect x="883.7" y="603.73" width="3.9" height="4.27" rx="1" fill="#2e8fd6" stroke="none" stroke-width="1" />
<rect x="888.5" y="595.19" width="3.9" height="12.81" rx="1" fill="#139e6c" stroke="none" stroke-width="1" />
<text x="526.0" y="627.8" font-size="9.6" fill="#5b6670" font-weight="normal" text-anchor="middle" >Sep 17</text>
<text x="594.9" y="627.8" font-size="9.6" fill="#5b6670" font-weight="normal" text-anchor="middle" >Sep 22</text>
<text x="663.81" y="627.8" font-size="9.6" fill="#5b6670" font-weight="normal" text-anchor="middle" >Sep 27</text>
<text x="732.71" y="627.8" font-size="9.6" fill="#5b6670" font-weight="normal" text-anchor="middle" >Oct 2</text>
<text x="787.83" y="627.8" font-size="9.6" fill="#5b6670" font-weight="normal" text-anchor="middle" >Oct 6</text>
<text x="856.74" y="627.8" font-size="9.6" fill="#5b6670" font-weight="normal" text-anchor="middle" >Oct 11</text>
<rect x="13.5" y="655.5" width="170" height="86" rx="8.5" fill="#f7f9f9" stroke="#dcdfe0" stroke-width="1" />
<text x="29.0" y="681.8" font-size="14" fill="#39434c" font-weight="normal" text-anchor="start"  textLength="109.82" lengthAdjust="spacingAndGlyphs">Verified followers</text>
<text x="28.5" y="721.0" font-size="27.5" fill="#0f1419" font-weight="bold" text-anchor="start"  textLength="43.60" lengthAdjust="spacingAndGlyphs">191</text>
<rect x="199.5" y="655.5" width="170" height="86" rx="8.5" fill="#f7f9f9" stroke="#dcdfe0" stroke-width="1" />
<text x="215.0" y="681.8" font-size="14" fill="#39434c" font-weight="normal" text-anchor="start"  textLength="77.92" lengthAdjust="spacingAndGlyphs">Impressions</text>
<text x="214.5" y="721.0" font-size="27.5" fill="#0f1419" font-weight="bold" text-anchor="start"  textLength="94.73" lengthAdjust="spacingAndGlyphs">210.8K</text>
<rect x="385" y="655.5" width="170" height="86" rx="8.5" fill="#f7f9f9" stroke="#dcdfe0" stroke-width="1" />
<text x="400.5" y="681.8" font-size="14" fill="#39434c" font-weight="normal" text-anchor="start"  textLength="107.40" lengthAdjust="spacingAndGlyphs">Engagement rate</text>
<text x="400" y="721.0" font-size="27.5" fill="#0f1419" font-weight="bold" text-anchor="start"  textLength="67.49" lengthAdjust="spacingAndGlyphs">9.5%</text>
<rect x="570.5" y="655.5" width="170" height="86" rx="8.5" fill="#f7f9f9" stroke="#dcdfe0" stroke-width="1" />
<text x="586.0" y="681.8" font-size="14" fill="#39434c" font-weight="normal" text-anchor="start"  textLength="86.39" lengthAdjust="spacingAndGlyphs">Engagements</text>
<text x="585.5" y="721.0" font-size="27.5" fill="#0f1419" font-weight="bold" text-anchor="start"  textLength="76.20" lengthAdjust="spacingAndGlyphs">20.1K</text>
<rect x="756" y="655.5" width="170" height="86" rx="8.5" fill="#f7f9f9" stroke="#dcdfe0" stroke-width="1" />
<text x="771.5" y="681.8" font-size="14" fill="#39434c" font-weight="normal" text-anchor="start"  textLength="77.71" lengthAdjust="spacingAndGlyphs">Profile visits</text>
<text x="771" y="721.0" font-size="27.5" fill="#0f1419" font-weight="bold" text-anchor="start"  textLength="56.05" lengthAdjust="spacingAndGlyphs">1.7K</text>
<rect x="13.5" y="757" width="170" height="86" rx="8.5" fill="#f7f9f9" stroke="#dcdfe0" stroke-width="1" />
<text x="29.0" y="783.3" font-size="14" fill="#39434c" font-weight="normal" text-anchor="start"  textLength="46.90" lengthAdjust="spacingAndGlyphs">Replies</text>
<text x="28.5" y="822.5" font-size="27.5" fill="#0f1419" font-weight="bold" text-anchor="start"  textLength="44.87" lengthAdjust="spacingAndGlyphs">761</text>
<rect x="199.5" y="757" width="170" height="86" rx="8.5" fill="#f7f9f9" stroke="#dcdfe0" stroke-width="1" />
<text x="215.0" y="783.3" font-size="14" fill="#39434c" font-weight="normal" text-anchor="start"  textLength="32.68" lengthAdjust="spacingAndGlyphs">Likes</text>
<text x="214.5" y="822.5" font-size="27.5" fill="#0f1419" font-weight="bold" text-anchor="start"  textLength="59.50" lengthAdjust="spacingAndGlyphs">7.5K</text>
<rect x="385" y="757" width="170" height="86" rx="8.5" fill="#f7f9f9" stroke="#dcdfe0" stroke-width="1" />
<text x="400.5" y="783.3" font-size="14" fill="#39434c" font-weight="normal" text-anchor="start"  textLength="51.36" lengthAdjust="spacingAndGlyphs">Reposts</text>
<text x="400" y="822.5" font-size="27.5" fill="#0f1419" font-weight="bold" text-anchor="start"  textLength="36.60" lengthAdjust="spacingAndGlyphs">2K</text>
<rect x="570.5" y="757" width="170" height="86" rx="8.5" fill="#f7f9f9" stroke="#dcdfe0" stroke-width="1" />
<text x="586.0" y="783.3" font-size="14" fill="#39434c" font-weight="normal" text-anchor="start"  textLength="70.02" lengthAdjust="spacingAndGlyphs">Bookmarks</text>
<text x="585.5" y="822.5" font-size="27.5" fill="#0f1419" font-weight="bold" text-anchor="start"  textLength="52.41" lengthAdjust="spacingAndGlyphs">346</text>
<rect x="756" y="757" width="170" height="86" rx="8.5" fill="#f7f9f9" stroke="#dcdfe0" stroke-width="1" />
<text x="771.5" y="783.3" font-size="14" fill="#39434c" font-weight="normal" text-anchor="start"  textLength="44.36" lengthAdjust="spacingAndGlyphs">Shares</text>
<text x="771" y="822.5" font-size="27.5" fill="#0f1419" font-weight="bold" text-anchor="start"  textLength="42.35" lengthAdjust="spacingAndGlyphs">114</text>
<text x="79.8" y="721.0" font-size="13" fill="#2f3b44" font-weight="normal" text-anchor="start"  textLength="31.71" lengthAdjust="spacingAndGlyphs">/ 886</text>
<path d="M321.8 711.0 V721.0 M318.40000000000003 714.4 L321.8 711.0 L325.2 714.4" fill="none" stroke="#2a9367" stroke-width="1.05" />
<text x="327.8" y="721.0" font-size="12.3" fill="#2a9367" font-weight="normal" text-anchor="start"  textLength="26.26" lengthAdjust="spacingAndGlyphs">44%</text>
<path d="M479.2 711.0 V721.0 M475.8 717.6 L479.2 721.0 L482.59999999999997 717.6" fill="none" stroke="#b9404f" stroke-width="1.05" />
<text x="487.3" y="721.0" font-size="12.3" fill="#b9404f" font-weight="normal" text-anchor="start"  textLength="28.12" lengthAdjust="spacingAndGlyphs">-10%</text>
<path d="M675.3 711.0 V721.0 M671.9 714.4 L675.3 711.0 L678.6999999999999 714.4" fill="none" stroke="#2a9367" stroke-width="1.05" />
<text x="681.2" y="721.0" font-size="12.3" fill="#2a9367" font-weight="normal" text-anchor="start"  textLength="25.86" lengthAdjust="spacingAndGlyphs">29%</text>
<path d="M840.5 711.0 V721.0 M837.1 714.4 L840.5 711.0 L843.9 714.4" fill="none" stroke="#2a9367" stroke-width="1.05" />
<text x="846.1" y="721.0" font-size="12.3" fill="#2a9367" font-weight="normal" text-anchor="start"  textLength="25.41" lengthAdjust="spacingAndGlyphs">26%</text>
<path d="M87.3 812.5 V822.5 M83.89999999999999 815.9 L87.3 812.5 L90.7 815.9" fill="none" stroke="#2a9367" stroke-width="1.05" />
<text x="93.1" y="822.5" font-size="12.3" fill="#2a9367" font-weight="normal" text-anchor="start"  textLength="24.83" lengthAdjust="spacingAndGlyphs">55%</text>
<path d="M287.6 812.5 V822.5 M284.20000000000005 815.9 L287.6 812.5 L291.0 815.9" fill="none" stroke="#2a9367" stroke-width="1.05" />
<text x="293.4" y="822.5" font-size="12.3" fill="#2a9367" font-weight="normal" text-anchor="start"  textLength="23.81" lengthAdjust="spacingAndGlyphs">14%</text>
<path d="M449.7 812.5 V822.5 M446.3 815.9 L449.7 812.5 L453.09999999999997 815.9" fill="none" stroke="#2a9367" stroke-width="1.05" />
<text x="455.5" y="822.5" font-size="12.3" fill="#2a9367" font-weight="normal" text-anchor="start"  textLength="29.50" lengthAdjust="spacingAndGlyphs">6.3%</text>
<path d="M650.8 812.5 V822.5 M647.4 815.9 L650.8 812.5 L654.1999999999999 815.9" fill="none" stroke="#2a9367" stroke-width="1.05" />
<text x="657.1" y="822.5" font-size="12.3" fill="#2a9367" font-weight="normal" text-anchor="start"  textLength="23.85" lengthAdjust="spacingAndGlyphs">73%</text>
<path d="M828.1999999999999 812.5 V822.5 M824.8 819.1 L828.1999999999999 822.5 L831.5999999999999 819.1" fill="none" stroke="#b9404f" stroke-width="1.05" />
<text x="835.0" y="822.5" font-size="12.3" fill="#b9404f" font-weight="normal" text-anchor="start"  textLength="34.35" lengthAdjust="spacingAndGlyphs">-3.3%</text>
<rect x="941" y="0" width="2" height="852" rx="0" fill="#f4f5f5" stroke="none" stroke-width="1" />
<g transform="translate(143.6 670.9) scale(0.545)"><path fill="#1d9bf0" d="M20.396 11c-.018-.646-.215-1.275-.57-1.816-.354-.54-.852-.972-1.438-1.246.223-.607.27-1.264.14-1.897-.131-.634-.437-1.218-.882-1.687-.47-.445-1.053-.75-1.687-.882-.633-.13-1.29-.083-1.897.14-.273-.587-.704-1.086-1.245-1.44S11.647 1.62 11 1.604c-.646.017-1.273.213-1.813.568s-.969.854-1.24 1.44c-.608-.223-1.267-.272-1.902-.14-.635.13-1.22.436-1.69.882-.445.47-.749 1.055-.878 1.688-.13.633-.08 1.29.144 1.896-.587.274-1.087.705-1.443 1.245-.356.54-.555 1.17-.574 1.817.02.647.218 1.276.574 1.817.356.54.856.972 1.443 1.245-.224.606-.274 1.263-.144 1.896.13.634.433 1.218.877 1.688.47.443 1.054.747 1.687.878.633.132 1.29.084 1.897-.136.274.586.705 1.084 1.246 1.439.54.354 1.17.551 1.816.569.647-.016 1.276-.213 1.817-.567s.972-.854 1.245-1.44c.604.239 1.266.296 1.903.164.636-.132 1.22-.447 1.68-.907.46-.46.776-1.044.908-1.681s.075-1.299-.165-1.903c.586-.274 1.084-.705 1.439-1.246.354-.54.551-1.17.569-1.816z"/><path fill="#ffffff" d="M9.662 14.85l-3.429-3.428 1.293-1.302 2.072 2.072 4.4-4.794 1.347 1.246z"/></g>
</svg>
</body></html>
